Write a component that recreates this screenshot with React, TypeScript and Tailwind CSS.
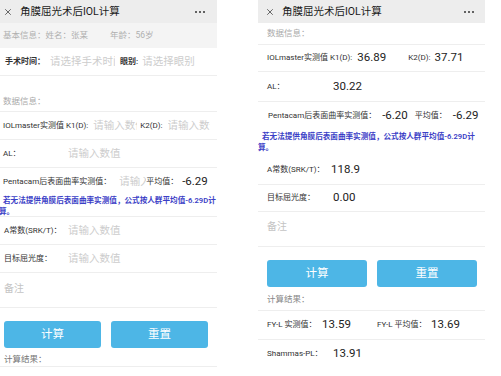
import { X } from 'lucide-react';
import type { ReactNode } from 'react';

const label = 'text-[8px] text-[#333] whitespace-nowrap';
const hint = 'text-[10.5px] text-[#cdcdcd] whitespace-nowrap overflow-hidden';
const num = "font-['Roboto',sans-serif] text-[11.5px] text-[#222] whitespace-nowrap";
const line = 'border-b border-[#eeeeee]';

function Header({ pl, dotsPr }: { pl: string; dotsPr: string }) {
  return (
    <div className={`h-[23px] bg-[#ededed] flex items-center ${pl} ${dotsPr}`}>
      <X size={10} strokeWidth={1.6} className="text-[#222] shrink-0" />
      <span className="ml-[7px] text-[10.5px] text-[#1a1a1a]">角膜屈光术后IOL计算</span>
      <span className="ml-auto flex gap-[2px] items-center">
        <i className="w-[2px] h-[2px] rounded-full bg-[#333]" />
        <i className="w-[2px] h-[2px] rounded-full bg-[#333]" />
        <i className="w-[2px] h-[2px] rounded-full bg-[#333]" />
      </span>
    </div>
  );
}

function Row({ h, pl, children, border = true }: { h: string; pl: string; children: ReactNode; border?: boolean }) {
  return <div className={`${h} ${pl} flex items-center ${border ? line : ''}`}>{children}</div>;
}

function Note({ pl }: { pl: string }) {
  return (
    <div className={`text-[7.6px] leading-[11px] font-semibold text-[#3b3ec6] whitespace-nowrap ${pl}`}>
      <div>若无法提供角膜后表面曲率实测值，公式按人群平均值-6.29D计</div>
      <div className="-ml-[4px]">算。</div>
    </div>
  );
}

function Buttons({ pl, w, gap }: { pl: string; w: string; gap: string }) {
  return (
    <div className={`flex ${pl} ${gap}`}>
      {['计算', '重置'].map((t) => (
        <div
          key={t}
          className={`${w} h-[27px] rounded-[3px] bg-[#4db6e6] text-white text-[11.5px] flex items-center justify-center`}
        >
          {t}
        </div>
      ))}
    </div>
  );
}

function LeftPanel() {
  return (
    <div className="w-[217px] shrink-0 flex flex-col">
      <Header pl="pl-[3px]" dotsPr="pr-[12px]" />
      <div className="h-[25px] bg-[#f4f4f4] flex items-center pl-[3px] text-[8.5px] text-[#b0b0b0] whitespace-nowrap">
        <span className="w-[107px]">基本信息：姓名：张某</span>
        <span>年龄：56岁</span>
      </div>
      <Row h="h-[28px]" pl="pl-[5px]">
        <span className={`${label} font-semibold`}>手术时间：</span>
        <span className={`${hint} ml-[5px] w-[65px]`}>请选择手术时间</span>
        <span className={`${label} font-semibold ml-[5px]`}>眼别:</span>
        <span className={`${hint} ml-[4px]`}>请选择眼别</span>
      </Row>
      <div className={`mt-[16px] h-[20px] ${line} flex items-center pl-[3px] text-[8.5px] text-[#aaa]`}>数据信息：</div>
      <Row h="h-[28px]" pl="pl-[3px]">
        <span className={label}>IOLmaster实测值 K1(D):</span>
        <span className={`${hint} ml-[5px] w-[44px]`}>请输入数值</span>
        <span className={`${label} ml-[3px]`}>K2(D):</span>
        <span className={`${hint} ml-[5px] w-[42px]`}>请输入数值</span>
      </Row>
      <Row h="h-[28px]" pl="pl-[3px]">
        <span className={`${label} w-[65px]`}>AL：</span>
        <span className={hint}>请输入数值</span>
      </Row>
      <Row h="h-[27px]" pl="pl-[3px]" border={false}>
        <span className={label}>Pentacam后表面曲率实测值：</span>
        <span className={`${hint} ml-[8px] w-[27px]`}>请输入数值</span>
        <span className={label}>平均值：</span>
        <span className={`${num} ml-[4px]`}>-6.29</span>
      </Row>
      <div className={`${line} h-[22px]`}>
        <Note pl="pl-[3px]" />
      </div>
      <Row h="h-[28px]" pl="pl-[4px]">
        <span className={`${label} w-[64px]`}>A常数(SRK/T)：</span>
        <span className={hint}>请输入数值</span>
      </Row>
      <Row h="h-[28px]" pl="pl-[4px]">
        <span className={`${label} w-[64px]`}>目标屈光度：</span>
        <span className={hint}>请输入数值</span>
      </Row>
      <div className={`h-[35px] ${line} pl-[4px] pt-[8px] text-[10px] text-[#c4c4c4]`}>备注</div>
      <div className="mt-[13px]">
        <Buttons pl="pl-[4px]" w="w-[97px]" gap="gap-[10px]" />
      </div>
      <div className={`mt-[5px] h-[14px] ${line} pl-[4px] text-[8.5px] text-[#777] leading-[12px]`}>计算结果：</div>
    </div>
  );
}

function RightPanel() {
  return (
    <div className="w-[227px] shrink-0 flex flex-col">
      <Header pl="pl-[7px]" dotsPr="pr-[11px]" />
      <Row h="h-[22px]" pl="pl-[9px]">
        <span className="text-[8.5px] text-[#aaa]">数据信息：</span>
      </Row>
      <Row h="h-[27px]" pl="pl-[9px]">
        <span className={label}>IOLmaster实测值 K1(D):</span>
        <span className={`${num} ml-[5px] w-[51px]`}>36.89</span>
        <span className={label}>K2(D):</span>
        <span className={`${num} ml-[4px]`}>37.71</span>
      </Row>
      <Row h="h-[30px]" pl="pl-[9px]">
        <span className={`${label} w-[66px]`}>AL：</span>
        <span className={num}>30.22</span>
      </Row>
      <Row h="h-[27px]" pl="pl-[10px]" border={false}>
        <span className={label}>Pentacam后表面曲率实测值：</span>
        <span className={`${num} ml-[6px]`}>-6.20</span>
        <span className={`${label} ml-[7px]`}>平均值：</span>
        <span className={`${num} ml-[6px]`}>-6.29</span>
      </Row>
      <div className="h-[27px] pt-[2px]">
        <Note pl="pl-[4px]" />
      </div>
      <Row h="h-[29px]" pl="pl-[9px]">
        <span className={`${label} w-[64px]`}>A常数(SRK/T)：</span>
        <span className={num}>118.9</span>
      </Row>
      <Row h="h-[27px]" pl="pl-[9px]">
        <span className={`${label} w-[66px]`}>目标屈光度：</span>
        <span className={num}>0.00</span>
      </Row>
      <div className={`h-[35px] ${line} pl-[9px] pt-[7px] text-[10px] text-[#c4c4c4]`}>备注</div>
      <div className="mt-[13px]">
        <Buttons pl="pl-[9px]" w="w-[100px]" gap="gap-[10px]" />
      </div>
      <div className={`mt-[5px] h-[19px] ${line} pl-[9px] text-[8.5px] text-[#888] leading-[12px] pt-[1px]`}>计算结果：</div>
      <Row h="h-[29px]" pl="pl-[9px]">
        <span className={`${label} w-[55px]`}>FY-L 实测值：</span>
        <span className={`${num} w-[55px]`}>13.59</span>
        <span className={`${label} w-[54px]`}>FY-L 平均值：</span>
        <span className={num}>13.69</span>
      </Row>
      <Row h="h-[28px]" pl="pl-[9px]" border={false}>
        <span className={`${label} w-[66px]`}>Shammas-PL：</span>
        <span className={num}>13.91</span>
      </Row>
    </div>
  );
}

export default function App() {
  return (
    <div className="w-[501px] h-[376px] overflow-hidden bg-white flex font-['Roboto','Noto_Sans_CJK_SC',sans-serif]">
      <LeftPanel />
      <div className="w-[41px] shrink-0" />
      <RightPanel />
    </div>
  );
}
